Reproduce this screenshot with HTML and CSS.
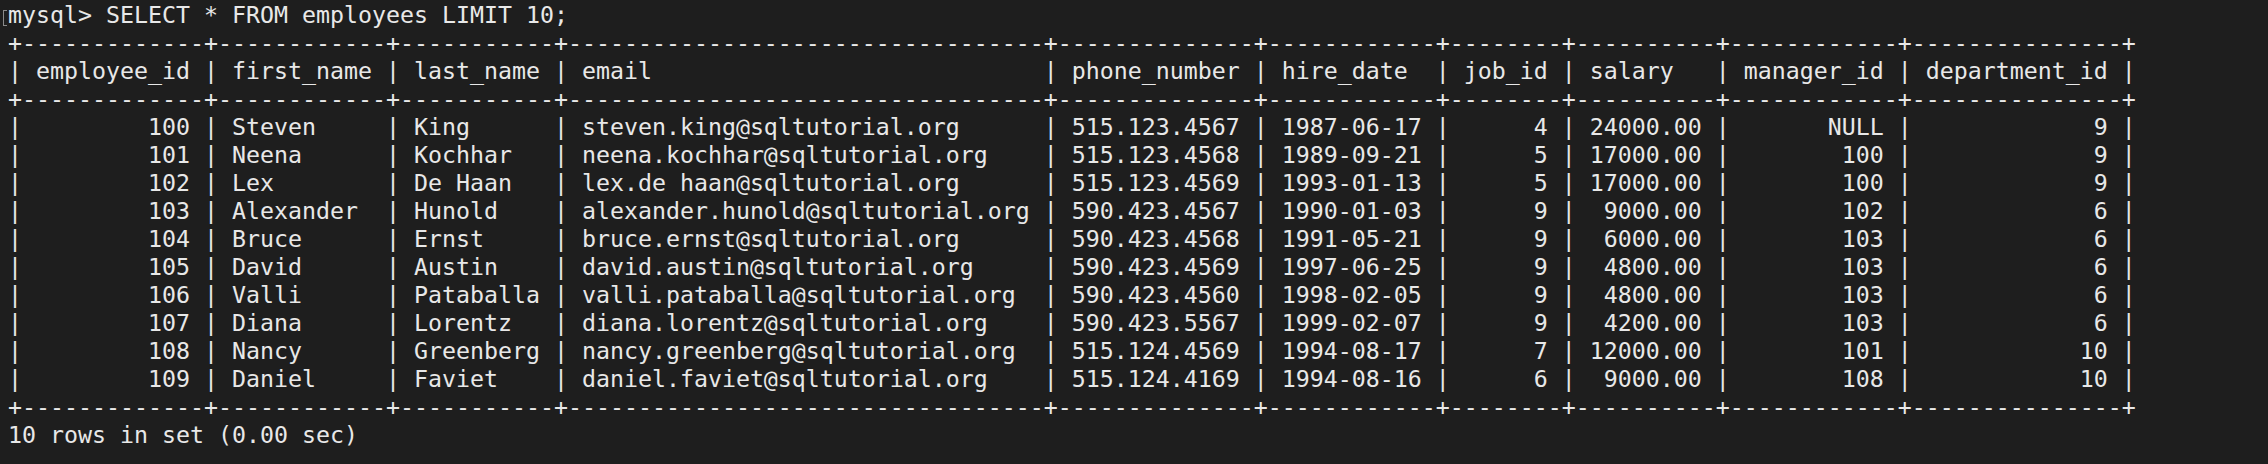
FILE: index.html
```html
<!DOCTYPE html>
<html lang="en">
<head>
<meta charset="utf-8">
<title>mysql</title>
<link rel="stylesheet" href="styles.css">
</head>
<body>
<main class="term">
<div class="prompt"><span class="mark"></span>mysql&gt; SELECT * FROM employees LIMIT 10;</div>
<pre class="out">+-------------+------------+-----------+----------------------------------+--------------+------------+--------+----------+------------+---------------+
| employee_id | first_name | last_name | email                            | phone_number | hire_date  | job_id | salary   | manager_id | department_id |
+-------------+------------+-----------+----------------------------------+--------------+------------+--------+----------+------------+---------------+
|         100 | Steven     | King      | steven.king@sqltutorial.org      | 515.123.4567 | 1987-06-17 |      4 | 24000.00 |       NULL |             9 |
|         101 | Neena      | Kochhar   | neena.kochhar@sqltutorial.org    | 515.123.4568 | 1989-09-21 |      5 | 17000.00 |        100 |             9 |
|         102 | Lex        | De Haan   | lex.de haan@sqltutorial.org      | 515.123.4569 | 1993-01-13 |      5 | 17000.00 |        100 |             9 |
|         103 | Alexander  | Hunold    | alexander.hunold@sqltutorial.org | 590.423.4567 | 1990-01-03 |      9 |  9000.00 |        102 |             6 |
|         104 | Bruce      | Ernst     | bruce.ernst@sqltutorial.org      | 590.423.4568 | 1991-05-21 |      9 |  6000.00 |        103 |             6 |
|         105 | David      | Austin    | david.austin@sqltutorial.org     | 590.423.4569 | 1997-06-25 |      9 |  4800.00 |        103 |             6 |
|         106 | Valli      | Pataballa | valli.pataballa@sqltutorial.org  | 590.423.4560 | 1998-02-05 |      9 |  4800.00 |        103 |             6 |
|         107 | Diana      | Lorentz   | diana.lorentz@sqltutorial.org    | 590.423.5567 | 1999-02-07 |      9 |  4200.00 |        103 |             6 |
|         108 | Nancy      | Greenberg | nancy.greenberg@sqltutorial.org  | 515.124.4569 | 1994-08-17 |      7 | 12000.00 |        101 |            10 |
|         109 | Daniel     | Faviet    | daniel.faviet@sqltutorial.org    | 515.124.4169 | 1994-08-16 |      6 |  9000.00 |        108 |            10 |
+-------------+------------+-----------+----------------------------------+--------------+------------+--------+----------+------------+---------------+
10 rows in set (0.00 sec)</pre>
</main>
</body>
</html>
```
FILE: styles.css
```css
html, body {
  margin: 0;
  padding: 0;
  background: #1e1e1e;
}
body {
  width: 2268px;
  height: 464px;
  overflow: hidden;
}
.term {
  padding: 1px 8px 0 8px;
  font-family: "DejaVu Sans Mono", "Liberation Mono", monospace;
  font-size: 23.25px;
  line-height: 28px;
  color: #e8e8e8;
}
.prompt {
  position: relative;
  white-space: pre;
}
.mark {
  position: absolute;
  left: -5px;
  top: 9px;
  width: 3px;
  height: 14px;
  border: 1.5px solid #8a8a8a;
  border-right: none;
}
.out {
  margin: 0;
  font: inherit;
  white-space: pre;
}
```
